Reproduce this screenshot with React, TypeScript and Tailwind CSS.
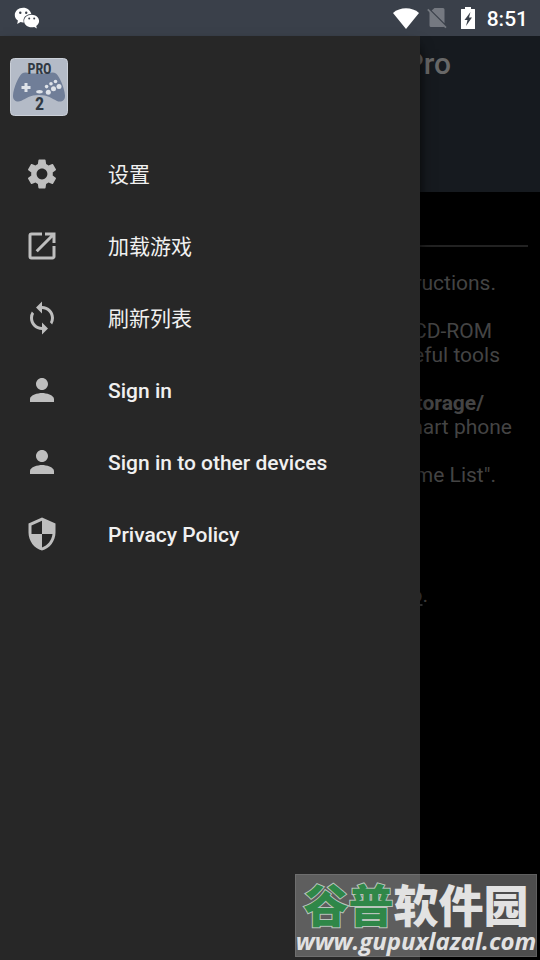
import type { ReactNode } from "react";
import { MdOpenInNew, MdPerson, MdSecurity, MdSettings, MdSync } from "react-icons/md";

interface MenuItem {
	label: string;
	icon: ReactNode;
	lang: string;
}

const menuItems: MenuItem[] = [
	{ label: "设置", icon: <MdSettings />, lang: "zh" },
	{ label: "加载游戏", icon: <MdOpenInNew />, lang: "zh" },
	{ label: "刷新列表", icon: <MdSync />, lang: "zh" },
	{ label: "Sign in", icon: <MdPerson />, lang: "en" },
	{ label: "Sign in to other devices", icon: <MdPerson />, lang: "en" },
	{ label: "Privacy Policy", icon: <MdSecurity />, lang: "en" },
];

function WeChatIcon() {
	return (
		<svg viewBox="0 0 26 22" className="h-[22px] w-[26px]">
			<path
				fill="#fff"
				d="M9.200.8C4.500.8.800 4 .8 8c0 2.300 1.200 4.300 3.100 5.600L3.200 17l3.400-1.900c1 .3 2 .4 3.200.3a6.200 6.200 0 0 1-.3-1.900c0-3.500 3.300-6.300 7.800-6.400C16.500 3.300 13.200.8 9.200.8z"
			/>
			<path
				fill="#fff"
				d="M17.600 7.700c-4.200 0-7.500 2.800-7.500 6.300s3.300 6.300 7.500 6.300c.9 0 1.800-.1 2.600-.4l2.700 1.500-.7-2.400c1.700-1.100 2.900-2.900 2.900-5 0-3.500-3.300-6.300-7.500-6.300z"
			/>
			<g fill="#3a404a">
				<circle cx="6.300" cy="5.800" r="1.200" />
				<circle cx="12.200" cy="5.800" r="1.200" />
				<circle cx="15.200" cy="11.600" r="1" />
				<circle cx="20.200" cy="11.600" r="1" />
			</g>
		</svg>
	);
}

function StatusBar() {
	return (
		<header className="flex h-9 items-center justify-between bg-[#3a404a] pl-3.5 pr-3 text-white">
			<WeChatIcon />
			<div className="flex items-center">
				<svg viewBox="0 0 26 21" className="h-[21px] w-[26px]">
					<path fill="#fff" d="M0 5C7-1.200 19-1.200 26 5L13 21z" />
				</svg>
				<svg viewBox="0 0 20 22" className="ml-2 h-[22px] w-5">
					<path fill="#757981" d="M7.500 1H16a1.500 1.500 0 0 1 1.500 1.500v13.800L4.700 3.500zM2.500 4.200 17.500 19.200a1.500 1.500 0 0 1-1.500.8H4a1.500 1.500 0 0 1-1.500-1.500z" />
					<path stroke="#757981" strokeWidth="1.700" d="M.8 2.400 19 20.700" />
				</svg>
				<svg viewBox="0 0 14 22" className="ml-3.5 h-[22px] w-3.5">
					<path fill="#fff" d="M4 0h6v2h3.500a.5.500 0 0 1 .5.500v19a.5.500 0 0 1-.5.500H.5a.5.500 0 0 1-.5-.5v-19A.5.500 0 0 1 .5 2H4z" />
					<path fill="#3a404a" d="M9.500 5 3.500 13h3L5 19l6-8.500H8z" />
				</svg>
				<span className="ml-3 pt-0.5 text-[21px] leading-9 font-medium">8:51</span>
			</div>
		</header>
	);
}

function AppLogo() {
	return (
		<svg viewBox="0 0 58 58" className="size-[58px]" role="img" aria-label="PRO 2">
			<rect x=".5" y=".5" width="57" height="57" rx="4" fill="#b4bbc7" stroke="#cbd0d8" />
			<path
				fill="#707e98"
				d="M12 15.500c2-1.500 5-1.500 8 0h18c3-1.500 6-1.500 8 0 3 2 8.500 14 9 22 .3 5.500-4.500 7.300-8.500 5.200C42 40.500 38 37 29 37s-13 3.500-17.500 5.700C7.500 44.700 2.700 43 3 37.500c.5-8 6-20 9-22z"
			/>
			<path stroke="#dfe3e9" strokeWidth="3" d="M11.500 29.500h9M16 25v9" />
			<g fill="#dfe3e9">
				<ellipse cx="29.500" cy="33.700" rx="3.300" ry="1.700" />
				<circle cx="36.600" cy="28.600" r="1.800" />
				<circle cx="41" cy="25.800" r="1.800" />
				<circle cx="45.500" cy="23.500" r="1.800" />
				<circle cx="38.300" cy="34.200" r="2.500" />
				<circle cx="43.500" cy="30.800" r="2.500" />
				<circle cx="49" cy="28.500" r="2.500" />
			</g>
			<g
				fill="#303943"
				fontFamily="'Roboto Condensed', 'Open Sans Condensed', Roboto, sans-serif"
				fontWeight="700"
				textAnchor="middle">
				<text x="29.500" y="16" fontSize="14">
					PRO
				</text>
				<text x="29.500" y="52" fontSize="18">
					2
				</text>
			</g>
		</svg>
	);
}

function Drawer() {
	return (
		<aside className="absolute inset-y-0 left-0 w-7/9 bg-[#272727] shadow-lg shadow-black">
			<div className="px-2.5 pt-[22px] pb-[22px]">
				<AppLogo />
			</div>
			<nav>
				<ul>
					{menuItems.map((item) => (
						<li key={item.label}>
							<button type="button" className="flex h-[72px] w-full items-center pl-6 text-left text-[21px] text-[#f0f0f0]">
								<span className="w-[84px] text-4xl text-[#bebebe]">{item.icon}</span>
								<span lang={item.lang} className={item.lang === "zh" ? "pt-1 font-normal" : "pt-1 font-medium"}>
									{item.label}
								</span>
							</button>
						</li>
					))}
				</ul>
			</nav>
		</aside>
	);
}

function GamePage() {
	return (
		<main className="text-right text-[21px] leading-6 text-[#444]">
			<div className="h-[156px] bg-[#161a1f] pt-2.5 pr-[89px]">
				<h1 className="text-[30px] leading-9 font-medium text-[#686868]">Pro</h1>
			</div>
			<hr className="mx-3 mt-[53px] border-t-2 border-[#222]" />
			<div className="flex flex-col gap-6 pt-6">
				<p className="pr-11">Instructions.</p>
				<div>
					<p className="pr-12">CD-ROM</p>
					<p className="pr-10">useful tools</p>
				</div>
				<div>
					<p className="pr-14 font-bold">/storage/</p>
					<p className="pr-7">smart phone</p>
				</div>
				<p className="pr-11">Game List".</p>
			</div>
			<p className="pt-24 pr-28">
				<span className="underline">o</span>.
			</p>
		</main>
	);
}

function Watermark() {
	return (
		<div className="absolute right-[3px] bottom-[3px] flex h-[83px] w-[242px] flex-col items-center border border-white/10 bg-[#8c8c8c]/55 whitespace-nowrap text-[#e2e2e2]">
			<p className="font-['Noto_Sans_CJK_SC',sans-serif] text-[45px] leading-[58px] font-black">
				<span className="text-[#2f8748] [paint-order:stroke_fill] [-webkit-text-stroke:2px_#b9c4bc]">谷普</span>
				<span>软件园</span>
			</p>
			<p className="font-['Open_Sans',sans-serif] text-[24px] leading-4 font-bold italic">www.gupuxlazal.com</p>
		</div>
	);
}

function App() {
	return (
		<div className="relative flex min-h-screen flex-col overflow-hidden bg-black font-[Roboto,'Noto_Sans_CJK_SC',sans-serif]">
			<StatusBar />
			<div className="relative flex-1">
				<GamePage />
				<Drawer />
			</div>
			<Watermark />
		</div>
	);
}

export default App;
